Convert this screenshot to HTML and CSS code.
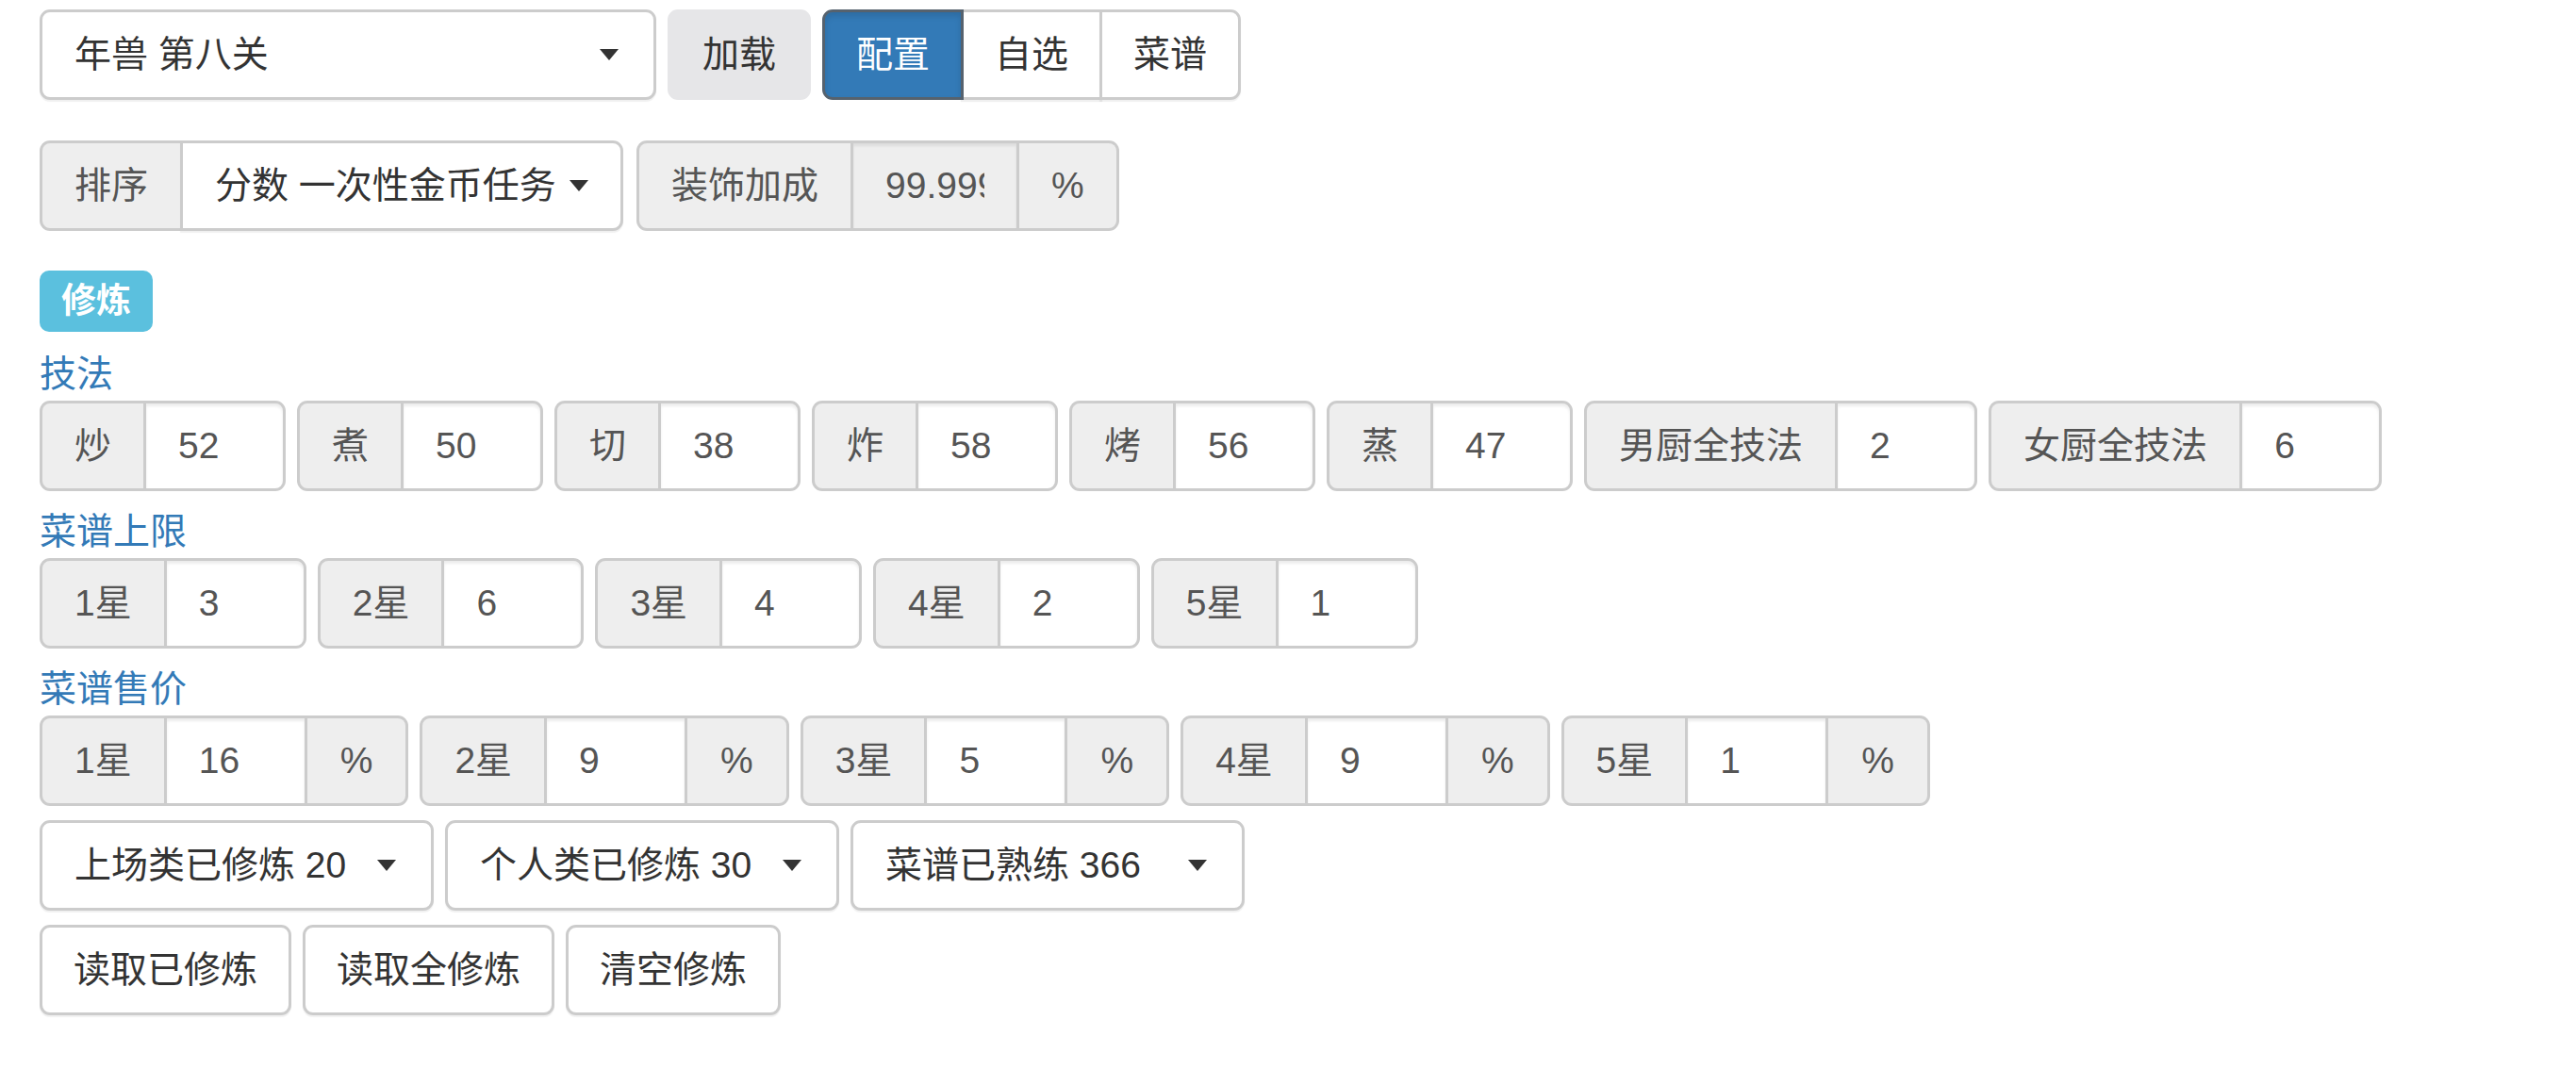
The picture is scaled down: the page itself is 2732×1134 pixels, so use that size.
FILE: index.html
```html
<!DOCTYPE html>
<html lang="zh-CN">
<head>
    <meta charset="UTF-8">
    <meta name="viewport" content="width=device-width, initial-scale=1.0">
    <title>修炼配置</title>
    <link rel="stylesheet" href="styles.css">
</head>
<body>
    <div class="page">
        <div class="line toolbar">
            <div class="select select-stage">
                <span>年兽 第八关</span><span class="caret"></span>
            </div>
            <button class="btn btn-load">加载</button>
            <div class="btn-group">
                <button class="btn btn-primary">配置</button>
                <button class="btn">自选</button>
                <button class="btn">菜谱</button>
            </div>
        </div>

        <div class="line options">
            <div class="input-group">
                <span class="addon">排序</span>
                <div class="select select-sort">
                    <span>分数 一次性金币任务</span><span class="caret"></span>
                </div>
            </div>
            <div class="input-group">
                <span class="addon">装饰加成</span>
                <input class="field field-deco" type="text" value="99.999" readonly>
                <span class="addon">%</span>
            </div>
        </div>

        <div class="tag-row">
            <span class="tag">修炼</span>
        </div>

        <div class="group-title first">技法</div>
        <div class="line">
            <div class="input-group"><span class="addon">炒</span><input class="field" type="text" value="52"></div>
            <div class="input-group"><span class="addon">煮</span><input class="field" type="text" value="50"></div>
            <div class="input-group"><span class="addon">切</span><input class="field" type="text" value="38"></div>
            <div class="input-group"><span class="addon">炸</span><input class="field" type="text" value="58"></div>
            <div class="input-group"><span class="addon">烤</span><input class="field" type="text" value="56"></div>
            <div class="input-group"><span class="addon">蒸</span><input class="field" type="text" value="47"></div>
            <div class="input-group"><span class="addon">男厨全技法</span><input class="field" type="text" value="2"></div>
            <div class="input-group"><span class="addon">女厨全技法</span><input class="field" type="text" value="6"></div>
        </div>

        <div class="group-title">菜谱上限</div>
        <div class="line">
            <div class="input-group"><span class="addon">1星</span><input class="field" type="text" value="3"></div>
            <div class="input-group"><span class="addon">2星</span><input class="field" type="text" value="6"></div>
            <div class="input-group"><span class="addon">3星</span><input class="field" type="text" value="4"></div>
            <div class="input-group"><span class="addon">4星</span><input class="field" type="text" value="2"></div>
            <div class="input-group"><span class="addon">5星</span><input class="field" type="text" value="1"></div>
        </div>

        <div class="group-title">菜谱售价</div>
        <div class="line price">
            <div class="input-group"><span class="addon">1星</span><input class="field" type="text" value="16"><span class="addon">%</span></div>
            <div class="input-group"><span class="addon">2星</span><input class="field" type="text" value="9"><span class="addon">%</span></div>
            <div class="input-group"><span class="addon">3星</span><input class="field" type="text" value="5"><span class="addon">%</span></div>
            <div class="input-group"><span class="addon">4星</span><input class="field" type="text" value="9"><span class="addon">%</span></div>
            <div class="input-group"><span class="addon">5星</span><input class="field" type="text" value="1"><span class="addon">%</span></div>
        </div>

        <div class="line selects">
            <div class="select select-filter"><span>上场类已修炼 20</span><span class="caret"></span></div>
            <div class="select select-filter"><span>个人类已修炼 30</span><span class="caret"></span></div>
            <div class="select select-filter"><span>菜谱已熟练 366</span><span class="caret"></span></div>
        </div>

        <div class="line actions">
            <button class="btn">读取已修炼</button>
            <button class="btn">读取全修炼</button>
            <button class="btn">清空修炼</button>
        </div>
    </div>
</body>
</html>
```

FILE: styles.css
```css
body {
    margin: 0;
    font-family: "Liberation Sans", "Noto Sans CJK SC", sans-serif;
    font-size: 39px;
    color: #333;
    background: #fff;
}
.page {
    padding: 10px 42px;
    display: flex;
    flex-direction: column;
    align-items: flex-start;
}
.line {
    display: flex;
    gap: 12px;
}
.options {
    margin-top: 43px;
    gap: 14px;
}
.selects,
.actions {
    margin-top: 15px;
}

/* buttons */
.btn {
    box-sizing: border-box;
    height: 96px;
    padding: 0 34px;
    font: inherit;
    line-height: 90px;
    color: #333;
    background: #fff;
    border: 3px solid #ccc;
    border-radius: 11px;
    box-shadow: 0 2px 1px rgba(0, 0, 0, 0.06);
    cursor: pointer;
}
.actions .btn {
    padding: 0 33px;
}
.btn-load {
    background: #e6e6e8;
    border-color: #e6e6e8;
    box-shadow: none;
}
.btn-group {
    display: flex;
}
.btn-group .btn {
    border-radius: 0;
    margin-left: -3px;
    padding: 0 33px;
}
.btn-group .btn:first-child {
    margin-left: 0;
    border-radius: 11px 0 0 11px;
}
.btn-group .btn:last-child {
    border-radius: 0 11px 11px 0;
}
.btn-primary {
    color: #fff;
    background: #337ab7;
    border-color: #56626e;
    position: relative;
    z-index: 1;
    box-shadow: inset 0 4px 6px rgba(0, 0, 0, 0.12);
}

/* fake selects */
.select {
    box-sizing: border-box;
    height: 96px;
    padding: 0 37px 0 34px;
    display: flex;
    align-items: center;
    justify-content: space-between;
    line-height: 56px;
    color: #333;
    background: #fff;
    border: 3px solid #ccc;
    border-radius: 11px;
    box-shadow: 0 2px 1px rgba(0, 0, 0, 0.06);
}
.input-group .select {
    border-radius: 0 11px 11px 0;
}
.select-stage {
    width: 654px;
}
.select-sort {
    width: 470px;
    padding-right: 34px;
}
.select-filter {
    width: 418px;
}
.caret {
    width: 0;
    height: 0;
    border-top: 12px solid #333;
    border-left: 10px solid transparent;
    border-right: 10px solid transparent;
}

/* input groups */
.input-group {
    display: flex;
    height: 96px;
}
.addon {
    box-sizing: border-box;
    height: 96px;
    padding: 0 34px;
    line-height: 90px;
    color: #555;
    background: #eee;
    border: 3px solid #ccc;
    white-space: nowrap;
}
.addon:first-child {
    border-right: 0;
    border-radius: 11px 0 0 11px;
}
.addon:last-child {
    border-left: 0;
    border-radius: 0 11px 11px 0;
}
.price .addon:last-child {
    padding: 0 35px;
}
.field {
    box-sizing: border-box;
    width: 151px;
    height: 96px;
    margin: 0;
    padding: 0 34px;
    font: inherit;
    color: #555;
    background: #fff;
    border: 3px solid #ccc;
    border-radius: 0 11px 11px 0;
    box-shadow: inset 0 3px 3px rgba(0, 0, 0, 0.075);
    outline: none;
}
.price .field {
    width: 152px;
}
.input-group .field:not(:last-child) {
    border-radius: 0;
}
.field-deco {
    width: 179px;
    background: #eee;
}

/* labels and headings */
.tag-row {
    margin-top: 42px;
}
.tag {
    display: inline-block;
    padding: 14px 23px 14px;
    font-size: 37px;
    font-weight: bold;
    line-height: 37px;
    color: #fff;
    background: #5bc0de;
    border-radius: 10px;
}
.group-title {
    margin-top: 15px;
    line-height: 56px;
    color: #337ab7;
}
.group-title.first {
    margin-top: 17px;
}
```
